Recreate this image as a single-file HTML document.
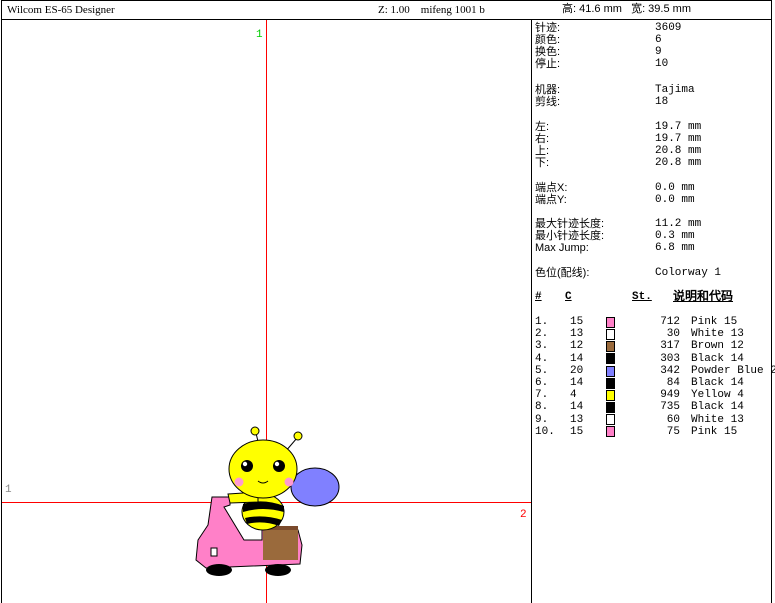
<!DOCTYPE html>
<html><head><meta charset="utf-8"><style>
*{margin:0;padding:0;box-sizing:border-box}
body{width:775px;height:603px;background:#fff;position:relative;overflow:hidden;font-family:"Liberation Mono","WenQuanYi Zen Hei",monospace;font-size:11px;color:#000}
.t{position:absolute;white-space:nowrap;line-height:12px}
.c{font-family:"Liberation Sans","WenQuanYi Zen Hei",sans-serif;font-size:11px}
.sw{position:absolute;width:9px;height:11px;border:1px solid #000}
</style></head><body>
<div style="position:absolute;left:1px;top:0;width:771px;height:603px;border:1px solid #000;border-bottom:none"></div>
<div style="position:absolute;left:1px;top:19px;width:771px;height:1px;background:#000"></div>
<div style="position:absolute;left:531px;top:20px;width:1px;height:583px;background:#000"></div>
<div class="t" style="left:7px;top:4px;font-family:'Liberation Serif',serif;">Wilcom ES-65 Designer</div>
<div class="t" style="left:378px;top:4px;font-family:'Liberation Serif',serif;">Z: 1.00&nbsp;&nbsp;&nbsp;&nbsp;mifeng 1001 b</div>
<div class="t c" style="left:562px;top:3px;">高: 41.6 mm&nbsp;&nbsp;&nbsp;宽: 39.5 mm</div>
<!-- crosshair -->
<div style="position:absolute;left:266px;top:20px;width:1px;height:583px;background:#f00"></div>
<div style="position:absolute;left:2px;top:502px;width:529px;height:1px;background:#f00"></div>
<div class="t" style="left:256px;top:29px;color:#0c0;">1</div>
<div class="t" style="left:5px;top:484px;color:#888;">1</div>
<div class="t" style="left:520px;top:509px;color:#f00;">2</div>
<svg style="position:absolute;left:0;top:0" width="775" height="603">
<line x1="256" y1="433" x2="260" y2="450" stroke="#000"/><circle cx="255" cy="431" r="4" fill="#ff0" stroke="#000"/>
<line x1="297" y1="438" x2="285" y2="452" stroke="#000"/><circle cx="298" cy="436" r="4" fill="#ff0" stroke="#000"/>
<ellipse cx="315" cy="487" rx="24" ry="19" fill="#8080ff" stroke="#000"/>
<path d="M212,497 L230,497 L230,505 L224,507 L244,540 L262,540 L262,530 L298,530 L302,545 L300,564 L206,568 L196,560 L198,540 L208,525 Z" fill="#ff80c8" stroke="#000"/>
<rect x="263" y="528" width="35" height="32" fill="#9a6a3c"/>
<rect x="263" y="526" width="35" height="4" fill="#7a4a2c"/>
<rect x="211" y="548" width="6" height="8" fill="#fff" stroke="#000"/>
<ellipse cx="219" cy="570" rx="13" ry="6" fill="#000"/>
<ellipse cx="278" cy="570" rx="13" ry="6" fill="#000"/>
<ellipse cx="263" cy="512" rx="21" ry="18" fill="#ff0" stroke="#000"/>
<path d="M243,504 Q263,498 284,506 L284,512 Q263,506 243,512Z" fill="#000"/>
<path d="M245,518 Q263,514 282,520 L279,526 Q263,520 247,524Z" fill="#000"/>
<path d="M228,494 L258,492 L258,502 L230,503 Z" fill="#ff0" stroke="#000"/>
<ellipse cx="263" cy="469" rx="34" ry="29" fill="#ff0" stroke="#000"/>
<circle cx="247" cy="466" r="6" fill="#000"/><circle cx="245" cy="464" r="2.2" fill="#fff"/>
<circle cx="279" cy="466" r="6" fill="#000"/><circle cx="277" cy="464" r="2.2" fill="#fff"/>
<circle cx="239" cy="482" r="4.5" fill="#ff9ad0"/><circle cx="289" cy="482" r="4.5" fill="#ff9ad0"/>
<path d="M258,481 Q263,485 268,481" fill="none" stroke="#000"/>
</svg>
<!-- info -->
<div class="t c" style="left:535px;top:22px;line-height:12px">针迹:<br>颜色:<br>换色:<br>停止:</div>
<div class="t" style="left:655px;top:22px;line-height:12px">3609<br>6<br>9<br>10</div>
<div class="t c" style="left:535px;top:84px;">机器:<br>剪线:</div>
<div class="t" style="left:655px;top:84px;">Tajima<br>18</div>
<div class="t c" style="left:535px;top:121px;">左:<br>右:<br>上:<br>下:</div>
<div class="t" style="left:655px;top:121px;">19.7 mm<br>19.7 mm<br>20.8 mm<br>20.8 mm</div>
<div class="t c" style="left:535px;top:182px;">端点X:<br>端点Y:</div>
<div class="t" style="left:655px;top:182px;">0.0 mm<br>0.0 mm</div>
<div class="t c" style="left:535px;top:218px;">最大针迹长度:<br>最小针迹长度:<br>Max Jump:</div>
<div class="t" style="left:655px;top:218px;">11.2 mm<br>0.3 mm<br>6.8 mm</div>
<div class="t c" style="left:535px;top:267px;">色位(配线):</div>
<div class="t" style="left:655px;top:267px;">Colorway 1</div>
<div class="t" style="left:535px;top:291px;font-weight:bold;text-decoration:underline">#</div>
<div class="t" style="left:565px;top:291px;font-weight:bold;text-decoration:underline">C</div>
<div class="t" style="left:632px;top:291px;font-weight:bold;text-decoration:underline">St.</div>
<div class="t c" style="left:673px;top:290px;font-weight:bold;text-decoration:underline;font-size:12px">说明和代码</div>
<div class="t" style="left:535px;top:316px;line-height:12.2px">1.<br>2.<br>3.<br>4.<br>5.<br>6.<br>7.<br>8.<br>9.<br>10.</div>
<div class="t" style="left:570px;top:316px;line-height:12.2px">15<br>13<br>12<br>14<br>20<br>14<br>4<br>14<br>13<br>15</div>
<div class="t" style="left:640px;top:316px;width:40px;text-align:right;line-height:12.2px">712<br>30<br>317<br>303<br>342<br>84<br>949<br>735<br>60<br>75</div>
<div class="t" style="left:691px;top:316px;line-height:12.2px">Pink 15<br>White 13<br>Brown 12<br>Black 14<br>Powder Blue 20<br>Black 14<br>Yellow 4<br>Black 14<br>White 13<br>Pink 15</div>
<div class="sw" style="left:606px;top:317px;background:#ff80c8"></div>
<div class="sw" style="left:606px;top:329px;background:#fff"></div>
<div class="sw" style="left:606px;top:341px;background:#9a6a3c"></div>
<div class="sw" style="left:606px;top:353px;background:#000"></div>
<div class="sw" style="left:606px;top:366px;background:#8080ff"></div>
<div class="sw" style="left:606px;top:378px;background:#000"></div>
<div class="sw" style="left:606px;top:390px;background:#ff0"></div>
<div class="sw" style="left:606px;top:402px;background:#000"></div>
<div class="sw" style="left:606px;top:414px;background:#fff"></div>
<div class="sw" style="left:606px;top:426px;background:#ff80c8"></div>
</body></html>
